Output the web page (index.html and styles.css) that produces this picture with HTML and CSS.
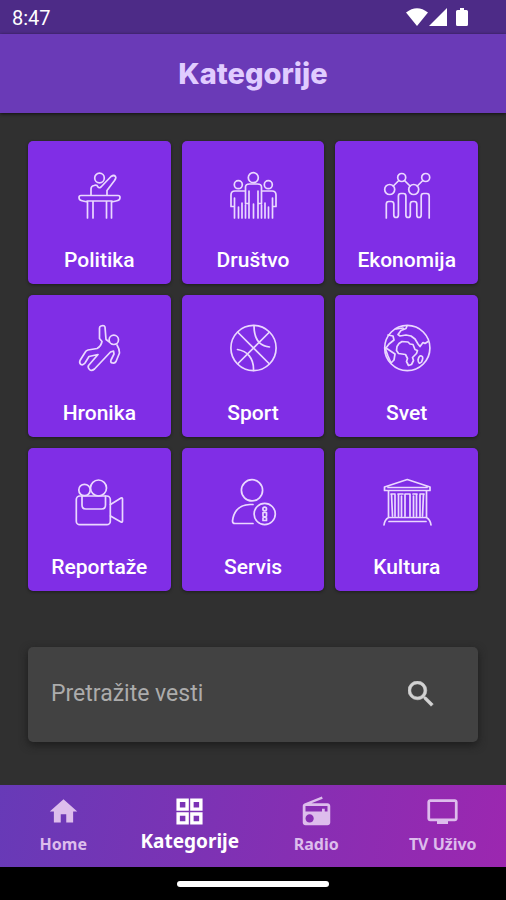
FILE: index.html
```html
<!DOCTYPE html>
<html lang="sr-Latn">
<head>
<meta charset="utf-8">
<meta name="viewport" content="width=device-width, initial-scale=1">
<title>Kategorije</title>
<link rel="stylesheet" href="styles.css">
</head>
<body>
<div class="status">
  <span class="clock">8:47</span>
  <svg class="status-icons" viewBox="0 0 64 20" aria-hidden="true">
    <path d="M0 4.500Q11-4 22 4.500L11 18Z"/>
    <path d="M41 0V18H23Z"/>
    <path d="M50 3.500a1.500 1.500 0 0 1 1.500-1.500H54V0h4v2h2.500A1.500 1.500 0 0 1 62 3.500v13a1.500 1.500 0 0 1-1.500 1.500h-9a1.500 1.500 0 0 1-1.500-1.500Z"/>
  </svg>
</div>
<header class="appbar"><h1 class="title">Kategorije</h1></header>
<main class="content">
  <div class="grid">
    <a class="tile" href="#politika">
      <svg class="tile-icon" viewBox="0 0 48 48" aria-hidden="true"><circle cx="24.500" cy="7" r="4.800"/><path d="M16 24v-6q0-3 3-3.500q3-1 4 1.500q1 1.500 3 0L36 5.500q3-2 4.500 0q1 1-1 4L32 19.500V24M6 24.500H43q2 0 2 2q0 3-4 3.500l-4.500 1V47M6 24.500q-2 0-2 2q0 3 4 3.500l4.500 1V47M18 47V30H31.500V47M12 30H37"/></svg>
      <span>Politika</span>
    </a>
    <a class="tile" href="#drustvo">
      <svg class="tile-icon" viewBox="0 0 48 48" aria-hidden="true"><circle cx="24.300" cy="6.700" r="5"/><circle cx="9.300" cy="13.700" r="4"/><circle cx="39.300" cy="13.700" r="4"/><path d="M19 32.500h-2.500V16q0-3 4-3h8q4 0 4 3v16.500H30M20 20V47M29 20V47M24.500 33V47M15 20H6q-4 0-4 4v11.500h3M34 20h9q4 0 4 4v11.500h-3M5.500 27V47M43.500 27V47M9.500 36V47M39.500 36V47M13 32V47M36 32V47M16.500 34V47M32.500 34V47"/></svg>
      <span>Društvo</span>
    </a>
    <a class="tile" href="#ekonomija">
      <svg class="tile-icon" viewBox="0 0 48 48" aria-hidden="true"><circle cx="6.700" cy="18.500" r="5"/><circle cx="18.700" cy="6.500" r="4"/><circle cx="30.700" cy="18.500" r="5"/><circle cx="42.700" cy="6.500" r="4"/><path d="M10.300 15l5.500-5.500M21.500 9.500l5.500 5.500M34.300 15l5.500-5.500M3.300 47V33q0-2.500 2.500-2.500h2.500q2.500 0 2.500 2.500v11q0 2.500 2.300 2.500t2.300-2.500V25q0-2.500 2.500-2.500h2.500q2.500 0 2.500 2.500v19q0 2.500 2.200 2.500t2.200-2.500V33q0-2.500 2.500-2.500h1.500q2.500 0 2.500 2.500v11q0 2.500 2.200 2.500t2.200-2.500V25q0-2.500 2.500-2.500h3q2.500 0 2.500 2.500v22"/></svg>
      <span>Ekonomija</span>
    </a>
    <a class="tile" href="#hronika">
      <svg class="tile-icon" viewBox="0 0 48 48" aria-hidden="true"><circle cx="38.800" cy="15.800" r="4.700"/><path d="M34.500 18L31 15.500L30 3q-.500-1.500-2-1.500l-2 .500q-1.500.500-1.500 2V14.500l2.500 3q-1 5-5 7L13 26q-2 .500-3 2.500L5 36.500q-1 2.500 1 4q2 1 4-1.500l4-6.500l9-2L13.500 41.500q-1 2 1 4t5-.500L35.500 28l3-1l.500 3l-3 6q-1 2.500 1.500 3t3.500-1.500L44.500 29q0-4-2.500-8"/></svg>
      <span>Hronika</span>
    </a>
    <a class="tile" href="#sport">
      <svg class="tile-icon" viewBox="0 0 48 48" aria-hidden="true"><circle cx="24.500" cy="24" r="22.600"/><path d="M9 8.500L40 39.500M40 8.500L9 39.500M25 1.500C25 14 30 22 40.500 23M8.500 25.500C18 27 25 34 24.500 46.500"/></svg>
      <span>Sport</span>
    </a>
    <a class="tile" href="#svet">
      <svg class="tile-icon" viewBox="0 0 48 48" aria-hidden="true"><circle cx="24.300" cy="24" r="22.600"/><path d="M16 19.500l3-2l6 .500l2 2l3 .500l2 5l2.500 1l-1 3l-4 4l1 3l-2 4l-3 1l-2-4l1-3l-2-4l-7-1l-2-3l.500-4ZM24 2l-1 2.500l-5 2l-3 4l2 1.500l6-1l5 1l4 3l3 5l2 2.500l3-4l2 1l3-2M13 5l7-1M5 11l5 1l1 4l-5 4l-3 4l3 2l6 4l-1 6l-3 3M2 24l3 8l3 7M35 36q1-5 3.500-4t0 6q-3 3-3.500-2"/></svg>
      <span>Svet</span>
    </a>
    <a class="tile" href="#reportaze">
      <svg class="tile-icon" viewBox="0 0 48 48" aria-hidden="true"><rect x="1.300" y="18" width="34" height="28.700" rx="3.500"/><circle cx="9.500" cy="12" r="5.700"/><circle cx="23.500" cy="10" r="8"/><path d="M7 18v9q0 4 4 4h15.500q4 0 4-4v-9M35.500 26.500L46 20q1.500-.500 1.500 1v22q0 1.500-1.500 1L35.500 38"/></svg>
      <span>Reportaže</span>
    </a>
    <a class="tile" href="#servis">
      <svg class="tile-icon" viewBox="0 0 48 48" aria-hidden="true"><circle cx="23" cy="12.300" r="10.600"/><circle cx="35.700" cy="36" r="10.600"/><path d="M24 26.500h-3Q7 27 4 40l-.500 3q0 2.500 2.500 2.500h18"/><circle cx="35.700" cy="31" r="1.800"/><path d="M34 34.500h3.500v3.500l-1.500 1l1.500 1v2.500H34V40l1.500-1l-1.500-1Z"/></svg>
      <span>Servis</span>
    </a>
    <a class="tile" href="#kultura">
      <svg class="tile-icon" viewBox="0 0 48 48" aria-hidden="true"><path d="M1.500 12.500V9L24.300 1.500L47 9v3.500ZM5 9.500H44M5.500 13V39M43.500 13V39M5.500 39.500H43.500M5.500 39.500Q1.500 42 1 47M43.500 39.500Q47.500 42 48 47M6 43.500H43M8.500 16L9.500 38M12 17V38M15.500 16V38M18.500 18V38M22 16V38M27 16V38M30.500 18V38M33.500 16V38M37 17V38M40.500 16L39.500 38M8 16h4M15 16h5M22 16h5M30 16h4M37 16h4"/></svg>
      <span>Kultura</span>
    </a>
  </div>
  <form class="search">
    <input class="search-input" type="text" placeholder="Pretražite vesti" aria-label="Pretražite vesti">
    <button class="search-button" type="submit" aria-label="Pretraži">
      <svg class="search-icon" viewBox="3 3 18 18" aria-hidden="true"><path d="M15.500 14h-.79l-.28-.27A6.471 6.471 0 0 0 16 9.500 6.500 6.500 0 1 0 9.500 16c1.610 0 3.090-.59 4.230-1.570l.27.28v.79l5 4.990L20.490 19l-4.990-5zm-6 0C7.010 14 5 11.990 5 9.500S7.010 5 9.500 5 14 7.010 14 9.500 11.990 14 9.500 14z"/></svg>
    </button>
  </form>
</main>
<nav class="tabs">
  <a class="tab" href="#home">
    <svg class="tab-icon" viewBox="0 0 24 24" aria-hidden="true"><path d="M10 20v-6h4v6h5v-8h3L12 3 2 12h3v8z"/></svg>
    <span>Home</span>
  </a>
  <a class="tab active" href="#kategorije" aria-current="page">
    <svg class="tab-icon" viewBox="0 0 24 24" aria-hidden="true"><path fill-rule="evenodd" d="M2.500 2.500v9h9v-9zm6.500 6.500H5V5h4v4zm-6.500 3.500v9h9v-9zM9 19H5v-4h4v4zm3.500-16.500v9h9v-9zM19 9h-4V5h4v4zm-6.500 3.500v9h9v-9zM19 19h-4v-4h4v4z"/></svg>
    <span>Kategorije</span>
  </a>
  <a class="tab" href="#radio">
    <svg class="tab-icon" viewBox="0 0 24 24" aria-hidden="true"><path d="M3.240 6.150C2.510 6.430 2 7.170 2 8v12c0 1.100.89 2 2 2h16c1.110 0 2-.9 2-2V8c0-1.110-.89-2-2-2H8.300l8.260-3.340L15.880 1 3.240 6.150zM7 20c-1.660 0-3-1.340-3-3s1.340-3 3-3 3 1.340 3 3-1.340 3-3 3zm13-8h-2v-2h-2v2H4V8h16v4z"/></svg>
    <span>Radio</span>
  </a>
  <a class="tab" href="#tv">
    <svg class="tab-icon" viewBox="0 0 24 24" aria-hidden="true"><path d="M21 3H3c-1.100 0-2 .9-2 2v12c0 1.100.9 2 2 2h5v2h8v-2h5c1.100 0 1.990-.9 1.990-2L23 5c0-1.100-.9-2-2-2zm0 14H3V5h18v12z"/></svg>
    <span>TV Uživo</span>
  </a>
</nav>
<div class="gesture"><div class="pill"></div></div>
</body>
</html>
```

FILE: styles.css
```css
* { box-sizing: border-box; }

body {
  margin: 0;
  min-height: 100vh;
  display: flex;
  flex-direction: column;
  background: #303030;
  font-family: Roboto, "Liberation Sans", sans-serif;
}

.status {
  height: 34px;
  padding: 2px 36px 0 12px;
  display: flex;
  align-items: center;
  justify-content: space-between;
  background: #4d2b87;
  color: #fff;
}

.clock { font-size: 20px; line-height: 24px; }

.status-icons { width: 64px; height: 20px; fill: #fff; }

.appbar {
  height: 79px;
  display: flex;
  align-items: center;
  justify-content: center;
  background: #6a3ab7;
  box-shadow: 0 1px 3px #111;
}

.title {
  margin: 0;
  font: 800 29px/36px Inter, sans-serif;
  color: #e0ccff;
}

.content {
  flex: 1;
  padding: 28px 28px 43px;
}

.grid {
  display: grid;
  grid-template-columns: repeat(3, 1fr);
  gap: 11px;
}

.tile {
  aspect-ratio: 1;
  padding-bottom: 11px;
  display: flex;
  flex-direction: column;
  align-items: center;
  justify-content: flex-end;
  gap: 28px;
  border-radius: 5px;
  background: #802ee6;
  box-shadow: 0 1px 3px #1c1c1c;
  color: #fff;
  font-size: 21px;
  font-weight: 500;
  line-height: 26px;
  text-decoration: none;
}

.tile-icon {
  width: 48px;
  height: 48px;
  overflow: visible;
  fill: none;
  stroke: #ead8ff;
  stroke-width: 1.7px;
  stroke-linecap: round;
  stroke-linejoin: round;
}

.search {
  margin-top: 56px;
  height: 95px;
  padding: 0 44px 2px 23px;
  display: flex;
  align-items: center;
  border-radius: 5px;
  background: #424242;
  box-shadow: 0 3px 8px #1c1c1c;
}

.search-input {
  flex: 1;
  min-width: 0;
  padding: 0;
  border: 0;
  outline: 0;
  background: none;
  color: #fff;
  font: 400 23px/30px Roboto, sans-serif;
}

.search-input::placeholder { color: #acacac; opacity: 1; }

.search-button {
  padding: 0;
  border: 0;
  display: flex;
  background: none;
}

.search-icon {
  width: 26px;
  height: 26px;
  fill: #d2d2d2;
  stroke: #d2d2d2;
  stroke-width: 0.4px;
}

.tabs {
  height: 82px;
  display: flex;
  background: linear-gradient(100deg, #673ab7, #9c27b0);
}

.tab {
  flex: 1 1 0;
  padding-top: 10px;
  display: flex;
  flex-direction: column;
  align-items: center;
  gap: 4px;
  color: #ddbdec;
  font: 700 16px/24px "Noto Sans", "Open Sans", sans-serif;
  text-decoration: none;
}

.tab.active {
  gap: 1px;
  color: #fff;
  font-size: 19px;
}

.tab-icon { width: 33px; height: 33px; fill: currentColor; }

.gesture {
  height: 33px;
  display: flex;
  align-items: center;
  justify-content: center;
  background: #000;
}

.pill { width: 30%; height: 6px; border-radius: 3px; background: #fff; }
```
